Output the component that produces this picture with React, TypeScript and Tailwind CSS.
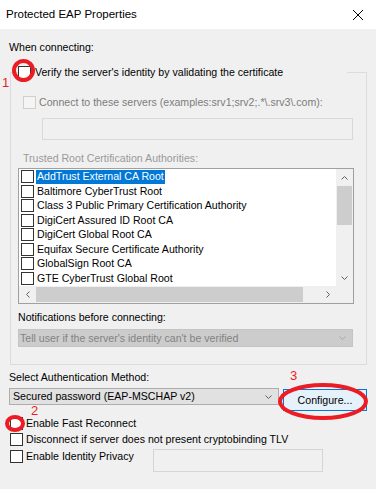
import React from "react";

const certs = [
  "AddTrust External CA Root",
  "Baltimore CyberTrust Root",
  "Class 3 Public Primary Certification Authority",
  "DigiCert Assured ID Root CA",
  "DigiCert Global Root CA",
  "Equifax Secure Certificate Authority",
  "GlobalSign Root CA",
  "GTE CyberTrust Global Root",
];

function Box({ disabled }: { disabled?: boolean }) {
  return (
    <span
      className={
        disabled
          ? "block h-[13px] w-[13px] shrink-0 border border-[#cfcfcf] bg-[#f4f4f4]"
          : "block h-[13px] w-[13px] shrink-0 border border-[#333333] bg-white"
      }
    />
  );
}

function Chevron({ dir, color = "#606060" }: { dir: "up" | "down" | "left" | "right"; color?: string }) {
  const d = {
    up: "M0.5 4.5 L3.5 1.5 L6.5 4.5",
    down: "M0.5 1.5 L3.5 4.5 L6.5 1.5",
    left: "M4.5 0.5 L1.5 3.5 L4.5 6.5",
    right: "M1.5 0.5 L4.5 3.5 L1.5 6.5",
  }[dir];
  const horiz = dir === "left" || dir === "right";
  return (
    <svg width={horiz ? 6 : 7} height={horiz ? 7 : 6} viewBox={horiz ? "0 0 6 7" : "0 0 7 6"}>
      <path d={d} fill="none" stroke={color} strokeWidth="1" />
    </svg>
  );
}

export default function App() {
  return (
    <div className="relative h-[489px] w-[376px] overflow-hidden bg-[#f0f0f0] font-['Liberation_Sans',Arial,sans-serif] text-[10.6px] leading-[13px] text-black">
      {/* Title bar */}
      <div className="flex h-[29px] items-center justify-between bg-white pl-[6px] pr-[13px]">
        <span className="text-[11.5px]">Protected EAP Properties</span>
        <svg width="10" height="10" viewBox="0 0 10 10">
          <path d="M0 0 L10 10 M10 0 L0 10" stroke="#000" strokeWidth="1" />
        </svg>
      </div>

      <div className="ml-[9px] mt-[12px] h-[13px]">When connecting:</div>

      {/* Group box */}
      <fieldset className="ml-[10px] mt-[12px] w-[357px] border border-[#dcdcdc] pb-[17px]">
        <legend className="ml-[7px] flex h-[13px] w-[329px] items-center gap-[4px] bg-[#f0f0f0]">
          <Box />
          <span>Verify the server's identity by validating the certificate</span>
        </legend>

        <div className="ml-[12px] mt-[17px] flex h-[13px] items-center gap-[3px] text-[#7c7c7c]">
          <Box disabled />
          <span>Connect to these servers (examples:srv1;srv2;.*\.srv3\.com):</span>
        </div>

        <div className="ml-[31px] mt-[9px] h-[22px] w-[311px] border border-[#d9d9d9] bg-[#f0f0f0]" />

        <div className="ml-[12px] mt-[12px] h-[13px] text-[#9a9a9a]">Trusted Root Certification Authorities:</div>

        {/* List box */}
        <div className="ml-[7px] mt-[3px] flex h-[136px] w-[336px] flex-col border border-[#a0a0a0] bg-white">
          <div className="flex h-[117px]">
            <div className="flex w-[317px] flex-col pl-[2px] pt-[0.5px]">
              {certs.map((c, i) => (
                <div key={c} className="flex h-[14.5px] items-center gap-[2px]">
                  <Box />
                  <span
                    className={
                      i === 0
                        ? "flex h-[14px] items-center bg-[#0078d7] px-[1px] text-white"
                        : "flex h-[14px] items-center px-[1px]"
                    }
                  >
                    {c}
                  </span>
                </div>
              ))}
            </div>
            <div className="flex w-[17px] flex-col items-center bg-[#f0f0f0]">
              <div className="flex h-[17px] w-full items-center justify-center">
                <Chevron dir="up" />
              </div>
              <div className="h-[39px] w-[15px] bg-[#cdcdcd]" />
              <div className="flex-1" />
              <div className="flex h-[17px] w-full items-center justify-center">
                <Chevron dir="down" />
              </div>
            </div>
          </div>
          <div className="flex h-[17px] bg-[#f0f0f0]">
            <div className="flex w-[17px] items-center justify-center">
              <Chevron dir="left" />
            </div>
            <div className="my-[1px] w-[267px] bg-[#cdcdcd]" />
            <div className="flex-1" />
            <div className="flex w-[17px] items-center justify-center">
              <Chevron dir="right" />
            </div>
            <div className="w-[17px]" />
          </div>
        </div>

        <div className="ml-[7px] mt-[7px] h-[13px]">Notifications before connecting:</div>

        <div className="ml-[7px] mt-[5px] flex h-[18px] w-[335px] items-center justify-between border border-[#c4c4c4] bg-[#cccccc] pl-[1px] pr-[6px] text-[#838383]">
          <span>Tell user if the server's identity can't be verified</span>
          <Chevron dir="down" color="#a8a8a8" />
        </div>
      </fieldset>

      <div className="ml-[9px] mt-[6px] h-[13px]">Select Authentication Method:</div>

      <div className="ml-[9px] mt-[4px] flex items-start">
        <div className="flex h-[17px] w-[270px] items-center justify-between border border-[#adadad] bg-[#e1e1e1] pl-[3px] pr-[6px]">
          <span>Secured password (EAP-MSCHAP v2)</span>
          <Chevron dir="down" />
        </div>
        <button className="ml-[4px] mt-[1px] flex h-[22px] w-[84px] items-center justify-center border border-[#0078d7] bg-[#e5f1fb]">
          Configure...
        </button>
      </div>

      <div className="ml-[10px] mt-[6px] flex h-[13px] items-center gap-[3px]">
        <Box />
        <span>Enable Fast Reconnect</span>
      </div>
      <div className="ml-[10px] mt-[3px] flex h-[13px] items-center gap-[3px]">
        <Box />
        <span>Disconnect if server does not present cryptobinding TLV</span>
      </div>
      <div className="ml-[10px] mt-[4px] flex items-start">
        <div className="flex h-[13px] w-[143px] items-center gap-[3px]">
          <Box />
          <span>Enable Identity Privacy</span>
        </div>
        <div className="-mt-[1px] h-[23px] w-[170px] border border-[#d5d5d5] bg-[#f0f0f0]" />
      </div>

      {/* Red annotations */}
      <svg className="pointer-events-none absolute left-0 top-0" width="376" height="489">
        <ellipse cx="23.5" cy="70.5" rx="9.5" ry="9.5" fill="none" stroke="#ec1c24" strokeWidth="4" />
        <ellipse cx="15" cy="423.5" rx="8" ry="6.5" fill="none" stroke="#ec1c24" strokeWidth="4" />
        <ellipse cx="323" cy="401.5" rx="43" ry="16.5" fill="none" stroke="#ec1c24" strokeWidth="4" />
      </svg>
      <span className="absolute left-[2px] top-[76px] text-[13px] leading-[13px] text-[#ec1c24]">1</span>
      <span className="absolute left-[31px] top-[405px] text-[13px] leading-[11px] text-[#ec1c24]">2</span>
      <span className="absolute left-[290px] top-[369px] text-[13px] leading-[13px] text-[#ec1c24]">3</span>
    </div>
  );
}
